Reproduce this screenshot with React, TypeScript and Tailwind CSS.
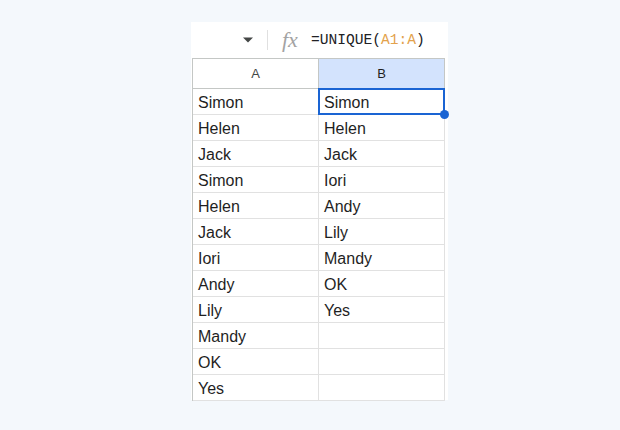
import React from "react";

const colA = ["Simon", "Helen", "Jack", "Simon", "Helen", "Jack", "Iori", "Andy", "Lily", "Mandy", "OK", "Yes"];
const colB = ["Simon", "Helen", "Jack", "Iori", "Andy", "Lily", "Mandy", "OK", "Yes", "", "", ""];

export default function App() {
  return (
    <div className="h-[430px] w-[620px] bg-[#f4f8fc] pl-[191px] pt-[22px] font-['Liberation_Sans',Arial,sans-serif]">
      <div className="h-[378px] w-[257px] bg-white">
        {/* Formula bar */}
        <div className="flex h-[36px] items-center">
          <svg width="10" height="6" viewBox="0 0 10 6" className="ml-[52px]" aria-hidden="true">
            <path d="M0 0.5H10L5 5.5Z" fill="#444746" />
          </svg>
          <div className="ml-[14px] h-[20px] w-px bg-[#e0e0e0]" />
          <span className="ml-[14px] font-['Liberation_Serif',serif] text-[22px] italic leading-none text-[#a3a3a3]">
            fx
          </span>
          <span className="ml-[13px] font-['Liberation_Mono',monospace] text-[14.6px] leading-none text-[#202124]">
            =UNIQUE(<span className="text-[#e3a24c]">A1:A</span>)
          </span>
        </div>

        {/* Grid */}
        <div className="ml-px w-[253px] border-l border-t border-[#c4c7c5]">
          <div className="flex h-[30px]">
            <div className="flex w-[126px] items-center justify-center border-b border-r border-[#c4c7c5] text-[13px] text-[#444746]">
              A
            </div>
            <div className="flex w-[126px] items-center justify-center border-b border-r border-[#c4c7c5] bg-[#d3e3fd] text-[13px] text-[#1f1f1f]">
              B
            </div>
          </div>
          {colA.map((a, i) => (
            <div key={i} className="flex h-[26px]">
              <div className="flex w-[126px] items-center border-b border-r border-[#e1e1e1] pl-[5px] pt-[2px] text-[16px] text-[#1f1f1f]">
                {a}
              </div>
              <div className="relative flex w-[126px] items-center border-b border-r border-[#e1e1e1] pl-[5px] pt-[2px] text-[16px] text-[#1f1f1f]">
                {colB[i]}
                {i === 0 && (
                  <>
                    <div className="absolute -left-[1px] -top-[1px] h-[27px] w-[127px] border-2 border-[#1a64d3]" />
                    <div className="absolute -bottom-[5px] -right-[5px] z-10 h-[9px] w-[9px] rounded-full bg-[#1a64d3]" />
                  </>
                )}
              </div>
            </div>
          ))}
        </div>
      </div>
    </div>
  );
}
